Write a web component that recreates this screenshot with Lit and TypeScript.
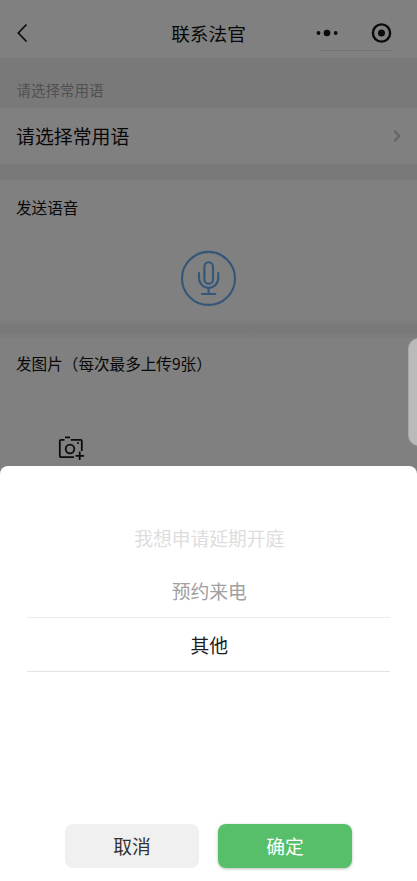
import { LitElement, html, css } from "lit";
import { customElement, state } from "lit/decorators.js";

@customElement("app-root")
export class AppRoot extends LitElement {
  @state() private options = ["我想申请延期开庭", "预约来电", "其他"];

  static styles = css`
    :host {
      display: block;
      position: relative;
      height: 881px;
      overflow: hidden;
      background: #808080;
      color: #080808;
      font-family: "Noto Sans CJK SC", sans-serif;
    }
    * { box-sizing: border-box; }
    svg { display: block; fill: none; }
    header {
      display: grid;
      grid-template-columns: 1fr auto 1fr;
      align-items: center;
      height: 58px;
      padding: 8px 15px 0;
    }
    h1 { margin: 0; font-size: 18.7px; font-weight: 400; line-height: 28px; }
    .back { margin-left: 1px; }
    .capsule { justify-self: end; }
    .hint {
      height: 50px;
      padding: 20px 16.5px 0;
      background: #797979;
      color: #505050;
      font-size: 14.5px;
      line-height: 24px;
    }
    .row {
      display: flex;
      align-items: center;
      justify-content: space-between;
      height: 56px;
      padding: 0 15px 0 16px;
      font-size: 18.9px;
      line-height: 28px;
    }
    .gap { height: 16px; background: #797979; }
    .gap.soft { background: linear-gradient(#7f7f7f, #7a7a7a 30%, #797979 70%, #7e7e7e); height: 18px; }
    .voice { height: 140px; padding: 15px 16px 0; }
    .photos { padding: 13px 16px 0; }
    h2 { margin: 0; font-size: 15.6px; font-weight: 400; line-height: 24px; white-space: nowrap; }
    .mic { margin: 31px 0 0 164px; }
    .upload { display: flex; justify-content: center; width: 110px; padding-top: 60px; }
    .handle {
      position: absolute;
      top: 338px;
      right: -12px;
      width: 21px;
      height: 108px;
      border-radius: 11px;
      background: #bababa;
      border: 1px solid #a8a8a8;
    }
    .sheet {
      position: absolute;
      top: 466px;
      left: 0;
      right: 0;
      bottom: 0;
      display: flex;
      flex-direction: column;
      justify-content: space-between;
      padding: 45px 27px 13px;
      border-radius: 8px 8px 0 0;
      background: #fff;
    }
    .option {
      height: 53px;
      display: flex;
      align-items: center;
      justify-content: center;
      padding-left: 1.5px;
      font-size: 18.8px;
      line-height: 28px;
      color: #ddd;
    }
    .option.near { color: #a0a0a0; height: 54px; }
    .option.chosen {
      height: 55px;
      margin-top: -1px;
      color: #1c1c1c;
      border-top: 1px solid #ededed;
      border-bottom: 1px solid #e4e4e4;
    }
    .actions { display: flex; justify-content: center; gap: 19px; }
    button {
      width: 134px;
      height: 44px;
      padding: 0;
      border: 0;
      border-radius: 8px;
      background: #f0f0f0;
      color: #333;
      font: 400 18.8px/28px "Noto Sans CJK SC", sans-serif;
    }
    .confirm { background: #57bf69; color: #fff; box-shadow: 0 1px 3px #68846c80; }
  `;

  render() {
    const tone = ["", "near", "chosen"];
    return html`
      <header>
        <svg class="back" width="14" height="20" viewBox="0 0 14 20" stroke="#0b0b0b" stroke-width="1.7">
          <path d="M10.5 1.5 2.3 10l8.2 8.5" />
        </svg>
        <h1>联系法官</h1>
        <svg class="capsule" width="92" height="36" viewBox="0 0 92 36">
          <g fill="#0b0b0b">
            <circle cx="8.5" cy="18" r="1.9" /><circle cx="17" cy="18" r="3.3" /><circle cx="25.7" cy="18" r="1.9" />
            <circle cx="71.5" cy="18" r="3.5" />
          </g>
          <circle cx="71.5" cy="18" r="8.6" stroke="#0b0b0b" stroke-width="2.4" />
          <path d="M10 35.5h72" stroke="#747474" />
        </svg>
      </header>
      <div class="hint">请选择常用语</div>
      <div class="row">
        <span>请选择常用语</span>
        <svg width="10" height="14" viewBox="0 0 10 14" stroke="#636363" stroke-width="2">
          <path d="m2.3 1.7 5 5.3-5 5.3" />
        </svg>
      </div>
      <div class="gap"></div>
      <section class="voice">
        <h2>发送语音</h2>
        <svg class="mic" width="57" height="57" viewBox="0 0 57 57" stroke="#345679" stroke-width="2.1">
          <circle cx="28.5" cy="28.4" r="26.5" />
          <rect x="24.4" y="12.3" width="8.6" height="21.4" rx="4.3" />
          <path d="M19 23v5.1a9.6 9.6 0 0 0 19.3 0V23M28.6 37.8v6M22 44h13.4" stroke-linecap="round" />
        </svg>
      </section>
      <div class="gap soft"></div>
      <section class="photos">
        <h2>发图片（每次最多上传9张）</h2>
        <div class="upload">
          <svg width="28" height="26" viewBox="0 0 28 26" stroke="#0b0b0b" stroke-width="1.8">
            <path d="M7.5 4.8H4.1q-1.3 0-1.3 1.3v14.8q0 1.3 1.3 1.3H17M13.8 4.8h9.7q1.3 0 1.3 1.3V16M8 2.4h5M22.7 16.6V25M18.5 20.8h8.6" />
            <circle cx="13" cy="14" r="4.3" />
            <circle cx="21" cy="8" r="1" fill="#0b0b0b" stroke="none" />
          </svg>
        </div>
      </section>
      <div class="handle"></div>
      <div class="sheet">
        <div class="picker">
          ${this.options.map((text, i) => html`<div class="option ${tone[i]}">${text}</div>`)}
        </div>
        <div class="actions">
          <button>取消</button>
          <button class="confirm">确定</button>
        </div>
      </div>
    `;
  }
}
